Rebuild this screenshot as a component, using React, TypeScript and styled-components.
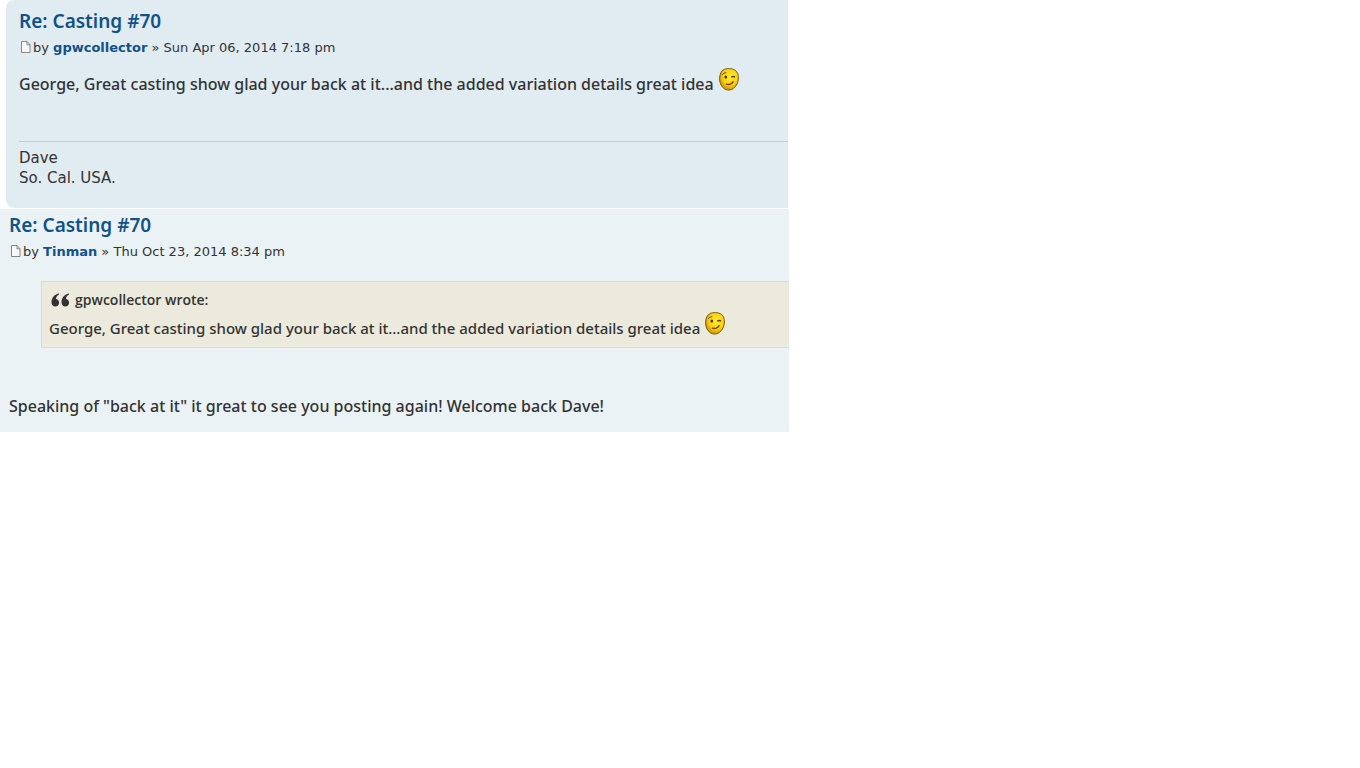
import React from 'react';
import styled, { createGlobalStyle } from 'styled-components';

const GlobalStyle = createGlobalStyle`
  body {
    margin: 0;
    background: #ffffff;
    color: #333333;
    font-family: 'Noto Sans', 'Open Sans', sans-serif;
  }
`;

const Thread = styled.main`
  width: 58%;
  display: flex;
  flex-direction: column;
  gap: 1px;
`;

const Post = styled.article<{ $tone: 'deep' | 'light' }>`
  box-sizing: border-box;
  background: ${p => (p.$tone === 'deep' ? '#e1ebf2' : '#ebf2f6')};
  margin-left: ${p => (p.$tone === 'deep' ? '6px' : '0')};
  margin-right: ${p => (p.$tone === 'deep' ? '1px' : '0')};
  padding: ${p => (p.$tone === 'deep' ? '8px 0 20px 13px' : '3px 0 10px 9px')};
  border-radius: ${p => (p.$tone === 'deep' ? '8px 0 0 8px' : '0')};
`;

const Title = styled.h3`
  margin: 0;
  font-size: 19px;
  line-height: 26px;
  font-weight: 600;
`;

const Link = styled.a`
  color: #105289;
  text-decoration: none;
  &:hover {
    text-decoration: underline;
  }
`;

const Byline = styled.p`
  margin: 0;
  display: flex;
  align-items: center;
  font-family: 'DejaVu Sans', Verdana, sans-serif;
  font-size: 13px;
  line-height: 28px;
  white-space: pre;
`;

const Author = styled(Link)`
  font-weight: 700;
`;

const Message = styled.p<{ $quoted?: boolean }>`
  margin: 0;
  display: flex;
  align-items: flex-start;
  gap: 5px;
  font-size: ${p => (p.$quoted ? '15px' : '16px')};
  font-weight: 500;
  line-height: 32px;
  white-space: nowrap;
`;

const Body = styled.div`
  padding-top: 6px;
`;

const Signature = styled.footer`
  margin-top: 41px;
  padding-top: 6px;
  border-top: 1px solid #c2ced4;
  font-family: 'DejaVu Sans', Verdana, sans-serif;
  font-size: 15px;
  line-height: 20px;
`;

const Quote = styled.blockquote`
  margin: 15px 0 42px 32px;
  padding: 6px 0 3px 7px;
  border: 1px solid #dbdbce;
  border-right: 0;
  background: #ebeadd;
`;

const Cite = styled.cite`
  display: flex;
  align-items: center;
  gap: 5px;
  padding-left: 2px;
  font-family: 'Open Sans', sans-serif;
  font-size: 14px;
  line-height: 24px;
  font-style: normal;
  font-weight: 600;
`;

const PageIcon = () => (
  <svg width="14" height="14" viewBox="0 0 14 14" aria-hidden="true">
    <path d="M2.500 .5h5.500l3 3.200v7.800H2.500z" fill="#f8f8f8" stroke="#858585" />
    <path d="M8 .5v3.300h3" fill="none" stroke="#858585" />
  </svg>
);

const QuoteIcon = () => (
  <svg width="19" height="14" viewBox="0 0 19 14" fill="#333333" aria-hidden="true">
    <path d="M8 .4C4 .8.5 4.500.5 9c0 2.800 1.500 4.500 3.700 4.500 2.300 0 3.900-1.500 3.900-3.700S6.700 6.200 5 6C5.200 4.200 6.200 2.500 8 1.600z" />
    <path d="M18 .4c-4 .4-7.500 4.100-7.500 8.600 0 2.800 1.500 4.500 3.700 4.500 2.300 0 3.900-1.500 3.900-3.700s-1.400-3.600-3.100-3.800c.2-1.800 1.200-3.500 3-4.400z" />
  </svg>
);

const WinkIcon = ({ id }: { id: string }) => (
  <svg width="20" height="24" viewBox="0 0 20 24" role="img" aria-label="Wink">
    <defs>
      <radialGradient id={id} cx="58%" cy="38%" r="65%">
        <stop offset="0" stopColor="#ffec30" />
        <stop offset=".6" stopColor="#fbd010" />
        <stop offset="1" stopColor="#c98a08" />
      </radialGradient>
    </defs>
    <path
      d="M5.500 1.300C8 .3 13 .3 15.500 1.800 18.500 3.600 19.500 6.500 19.400 10c-.1 4.500-2 8-4.900 10.400-2.500 2-6.300 2.200-8.800.6C2.500 19 .7 15.500.6 11 .5 6.500 2 2.700 5.500 1.300z"
      fill={`url(#${id})`}
      stroke="#79600f"
    />
    <ellipse cx="6.800" cy="9" rx="1.300" ry="1.600" fill="#3d2704" />
    <path d="M3.500 6.800C4.300 5.200 5.600 4.600 7.300 4.800" fill="none" stroke="#6d4806" />
    <path d="M12.300 9.300c.8-.8 2.400-1 3.700-.2" fill="none" stroke="#5a3804" strokeWidth="1.400" />
    <path d="M7 15.800c2.800 1.400 6.200.2 7.300-2.500" fill="none" stroke="#793c05" strokeWidth="1.500" />
  </svg>
);

const greeting =
  'George, Great casting show glad your back at it...and the added variation details great idea';

const Header = ({ author, date }: { author: string; date: string }) => (
  <header>
    <Title>
      <Link href="#post">Re: Casting #70</Link>
    </Title>
    <Byline>
      <PageIcon />
      <span>
        by <Author href="#member">{author}</Author> » {date}
      </span>
    </Byline>
  </header>
);

export default function App() {
  return (
    <>
      <GlobalStyle />
      <Thread>
        <Post $tone="deep">
          <Header author="gpwcollector" date="Sun Apr 06, 2014 7:18 pm" />
          <Body>
            <Message>
              {greeting}
              <WinkIcon id="wink-reply" />
            </Message>
          </Body>
          <Signature>
            Dave
            <br />
            So. Cal. USA.
          </Signature>
        </Post>
        <Post $tone="light">
          <Header author="Tinman" date="Thu Oct 23, 2014 8:34 pm" />
          <Quote>
            <Cite>
              <QuoteIcon />
              gpwcollector wrote:
            </Cite>
            <Message $quoted>
              {greeting}
              <WinkIcon id="wink-quote" />
            </Message>
          </Quote>
          <Message>
            Speaking of "back at it" it great to see you posting again! Welcome back Dave!
          </Message>
        </Post>
      </Thread>
    </>
  );
}
